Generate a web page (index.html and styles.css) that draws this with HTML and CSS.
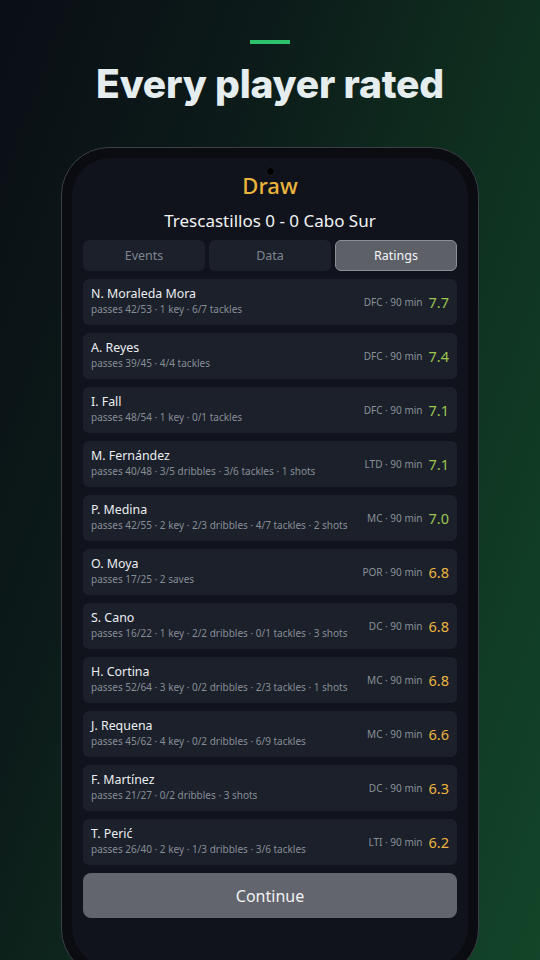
FILE: index.html
```html
<!DOCTYPE html>
<html>
<head>
<meta charset="utf-8">
<link rel="stylesheet" href="styles.css">
</head>
<body>
<div class="page">
  <div class="accent"></div>
  <h1 class="headline">Every player rated</h1>
  <div class="phone">
    <div class="screen">
      <div class="camera"></div>
      <div class="result">Draw</div>
      <div class="score">Trescastillos 0 - 0 Cabo Sur</div>
      <div class="tabs">
        <div class="tab">Events</div>
        <div class="tab">Data</div>
        <div class="tab active">Ratings</div>
      </div>
      <div class="list">
        <div class="row"><div class="info"><div class="name">N. Moraleda Mora</div><div class="stats">passes 42/53 · 1 key · 6/7 tackles</div></div><div class="side"><span class="meta">DFC · 90 min</span><span class="rating good">7.7</span></div></div>
        <div class="row"><div class="info"><div class="name">A. Reyes</div><div class="stats">passes 39/45 · 4/4 tackles</div></div><div class="side"><span class="meta">DFC · 90 min</span><span class="rating good">7.4</span></div></div>
        <div class="row"><div class="info"><div class="name">I. Fall</div><div class="stats">passes 48/54 · 1 key · 0/1 tackles</div></div><div class="side"><span class="meta">DFC · 90 min</span><span class="rating good">7.1</span></div></div>
        <div class="row"><div class="info"><div class="name">M. Fernández</div><div class="stats">passes 40/48 · 3/5 dribbles · 3/6 tackles · 1 shots</div></div><div class="side"><span class="meta">LTD · 90 min</span><span class="rating good">7.1</span></div></div>
        <div class="row"><div class="info"><div class="name">P. Medina</div><div class="stats">passes 42/55 · 2 key · 2/3 dribbles · 4/7 tackles · 2 shots</div></div><div class="side"><span class="meta">MC · 90 min</span><span class="rating good">7.0</span></div></div>
        <div class="row"><div class="info"><div class="name">O. Moya</div><div class="stats">passes 17/25 · 2 saves</div></div><div class="side"><span class="meta">POR · 90 min</span><span class="rating ok">6.8</span></div></div>
        <div class="row"><div class="info"><div class="name">S. Cano</div><div class="stats">passes 16/22 · 1 key · 2/2 dribbles · 0/1 tackles · 3 shots</div></div><div class="side"><span class="meta">DC · 90 min</span><span class="rating ok">6.8</span></div></div>
        <div class="row"><div class="info"><div class="name">H. Cortina</div><div class="stats">passes 52/64 · 3 key · 0/2 dribbles · 2/3 tackles · 1 shots</div></div><div class="side"><span class="meta">MC · 90 min</span><span class="rating ok">6.8</span></div></div>
        <div class="row"><div class="info"><div class="name">J. Requena</div><div class="stats">passes 45/62 · 4 key · 0/2 dribbles · 6/9 tackles</div></div><div class="side"><span class="meta">MC · 90 min</span><span class="rating ok">6.6</span></div></div>
        <div class="row"><div class="info"><div class="name">F. Martínez</div><div class="stats">passes 21/27 · 0/2 dribbles · 3 shots</div></div><div class="side"><span class="meta">DC · 90 min</span><span class="rating ok">6.3</span></div></div>
        <div class="row"><div class="info"><div class="name">T. Perić</div><div class="stats">passes 26/40 · 2 key · 1/3 dribbles · 3/6 tackles</div></div><div class="side"><span class="meta">LTI · 90 min</span><span class="rating ok">6.2</span></div></div>
      </div>
      <div class="continue">Continue</div>
    </div>
  </div>
</div>
</body>
</html>
```
FILE: styles.css
```css
* { box-sizing: border-box; margin: 0; padding: 0; }
html, body { width: 540px; height: 960px; overflow: hidden; }
body {
  background: #0b1016;
  font-family: "Noto Sans", "DejaVu Sans", sans-serif;
}
.page {
  width: 540px;
  height: 960px;
  overflow: hidden;
  background: linear-gradient(110deg, #0a0e15 0%, #0c1a19 30%, #0f3120 62%, #124529 100%);
  display: flex;
  flex-direction: column;
  align-items: center;
}
.page > * { flex-shrink: 0; }
.accent {
  width: 40px;
  height: 4px;
  background: #2fc26c;
  margin-top: 40px;
}
.headline {
  font-family: Inter, "Noto Sans", sans-serif;
  font-weight: 800;
  font-size: 39px;
  line-height: 46px;
  color: #e6edef;
  margin-top: 17px;
  letter-spacing: -0.2px;
}
.phone {
  margin-top: 40px;
  width: 418px;
  height: 830px;
  border: 1.5px solid #3c3f46;
  border-radius: 48px;
  background: #0a0c11;
  padding: 10px;
}
.screen {
  position: relative;
  height: 100%;
  border-radius: 38px;
  background: #10131b;
  padding: 12px 11px 0;
  display: flex;
  flex-direction: column;
}
.camera {
  position: absolute;
  left: 50%;
  top: 9px;
  width: 9px;
  height: 9px;
  margin-left: -4.5px;
  border-radius: 50%;
  background: #000;
  border: 1px solid #1b1e25;
}
.result {
  text-align: center;
  color: #eab43c;
  font-size: 22px;
  line-height: 30px;
  font-weight: 500;
}
.score {
  text-align: center;
  color: #f2f3f5;
  font-size: 17px;
  line-height: 24px;
  margin-top: 9px;
}
.tabs {
  display: grid;
  grid-template-columns: 1fr 1fr 1fr;
  gap: 4px;
  margin-top: 7px;
}
.tab {
  height: 31px;
  border-radius: 6px;
  background: #1b202a;
  color: #7f8590;
  font-size: 12.5px;
  display: flex;
  align-items: center;
  justify-content: center;
}
.tab.active {
  background: #5d6067;
  border: 1px solid #8c8f96;
  color: #f4f5f7;
}
.list {
  display: flex;
  flex-direction: column;
  gap: 8px;
  margin-top: 8px;
}
.row {
  height: 46px;
  border-radius: 6px;
  background: #1b202a;
  padding: 7px 8px 0 8px;
  display: flex;
  justify-content: space-between;
  align-items: flex-start;
}
.name {
  color: #eceef1;
  font-size: 12.4px;
  line-height: 16px;
}
.stats {
  color: #878d97;
  font-size: 10px;
  line-height: 15px;
}
.side {
  display: flex;
  align-items: center;
  gap: 6px;
  height: 32px;
}
.meta {
  color: #8a9099;
  font-size: 10px;
}
.rating {
  font-size: 14.5px;
}
.rating.good { color: #9cc650; }
.rating.ok { color: #ecb53f; }
.continue {
  margin-top: 8px;
  height: 45px;
  border-radius: 8px;
  background: #62656d;
  color: #f1f2f4;
  font-size: 16px;
  display: flex;
  align-items: center;
  justify-content: center;
}
```
